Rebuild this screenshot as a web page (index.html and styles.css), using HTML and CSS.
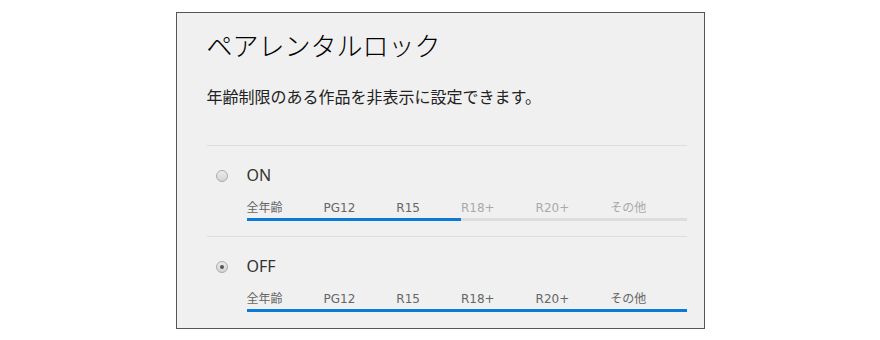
FILE: index.html
```html
<!DOCTYPE html>
<html lang="ja">
<head>
  <meta charset="UTF-8" />
  <title>ペアレンタルロック</title>
  <link rel="stylesheet" href="styles.css">
</head>
<body>
  <div class="panel">
    <h1 class="title">ペアレンタルロック</h1>
    <p class="desc">年齢制限のある作品を非表示に設定できます。</p>

    <div class="options">
      <div class="option">
        <span class="radio"></span>
        <div class="option-body">
          <div class="option-label">ON</div>
          <ul class="ratings">
            <li class="on">全年齢</li>
            <li class="on">PG12</li>
            <li class="on">R15</li>
            <li>R18+</li>
            <li>R20+</li>
            <li>その他</li>
          </ul>
        </div>
      </div>

      <div class="option">
        <span class="radio checked"></span>
        <div class="option-body">
          <div class="option-label">OFF</div>
          <ul class="ratings">
            <li class="on">全年齢</li>
            <li class="on">PG12</li>
            <li class="on">R15</li>
            <li class="on">R18+</li>
            <li class="on">R20+</li>
            <li class="on">その他</li>
          </ul>
        </div>
      </div>
    </div>
  </div>
</body>
</html>
```

FILE: styles.css
```css
body {
  margin: 0;
  background: #fff;
  font-family: 'Noto Sans', 'Noto Sans CJK JP', sans-serif;
  color: #333;
}

.panel {
  width: 497px;
  height: 301px;
  margin: 12px auto 0;
  padding: 14px 0 0 30px;
  background: #f0f0f0;
  border: 1px solid #555;
  overflow: hidden;
}

.title {
  margin: 0;
  font-family: 'Noto Sans CJK JP', sans-serif;
  font-size: 26px;
  font-weight: 300;
  line-height: 36px;
  color: #000;
}

.desc {
  margin: 21px 0 0;
  font-family: 'Noto Sans CJK JP', sans-serif;
  font-size: 16px;
  line-height: 24px;
  color: #222;
}

.options {
  width: 480px;
  margin-top: 37px;
}

.option {
  display: flex;
  align-items: flex-start;
  gap: 19px;
  padding: 17px 0 15px 9px;
  border-top: 1px solid #ddd;
}

.radio {
  position: relative;
  flex: none;
  width: 10px;
  height: 10px;
  margin-top: 7px;
  border: 1px solid #aaa;
  border-radius: 50%;
  background: linear-gradient(#ececec, #d4d4d4);
}

.radio.checked::after {
  content: '';
  position: absolute;
  top: 3px;
  left: 3px;
  width: 4px;
  height: 4px;
  border-radius: 50%;
  background: #555;
}

.option-body {
  flex: 1;
}

.option-label {
  font-size: 16px;
  line-height: 24px;
  color: #333;
}

.ratings {
  display: flex;
  margin: 10px 0 0;
  padding: 0;
  list-style: none;
}

.ratings li {
  padding: 2px 41px 0 0;
  font-family: 'DejaVu Sans', 'Noto Sans CJK JP', sans-serif;
  font-size: 12px;
  line-height: 19px;
  color: #aaa;
  border-bottom: 3px solid #ddd;
}

.ratings li:last-child {
  flex: 1;
  padding-right: 0;
}

.ratings li.on {
  color: #666;
  border-bottom-color: #0a7ad8;
}
```
